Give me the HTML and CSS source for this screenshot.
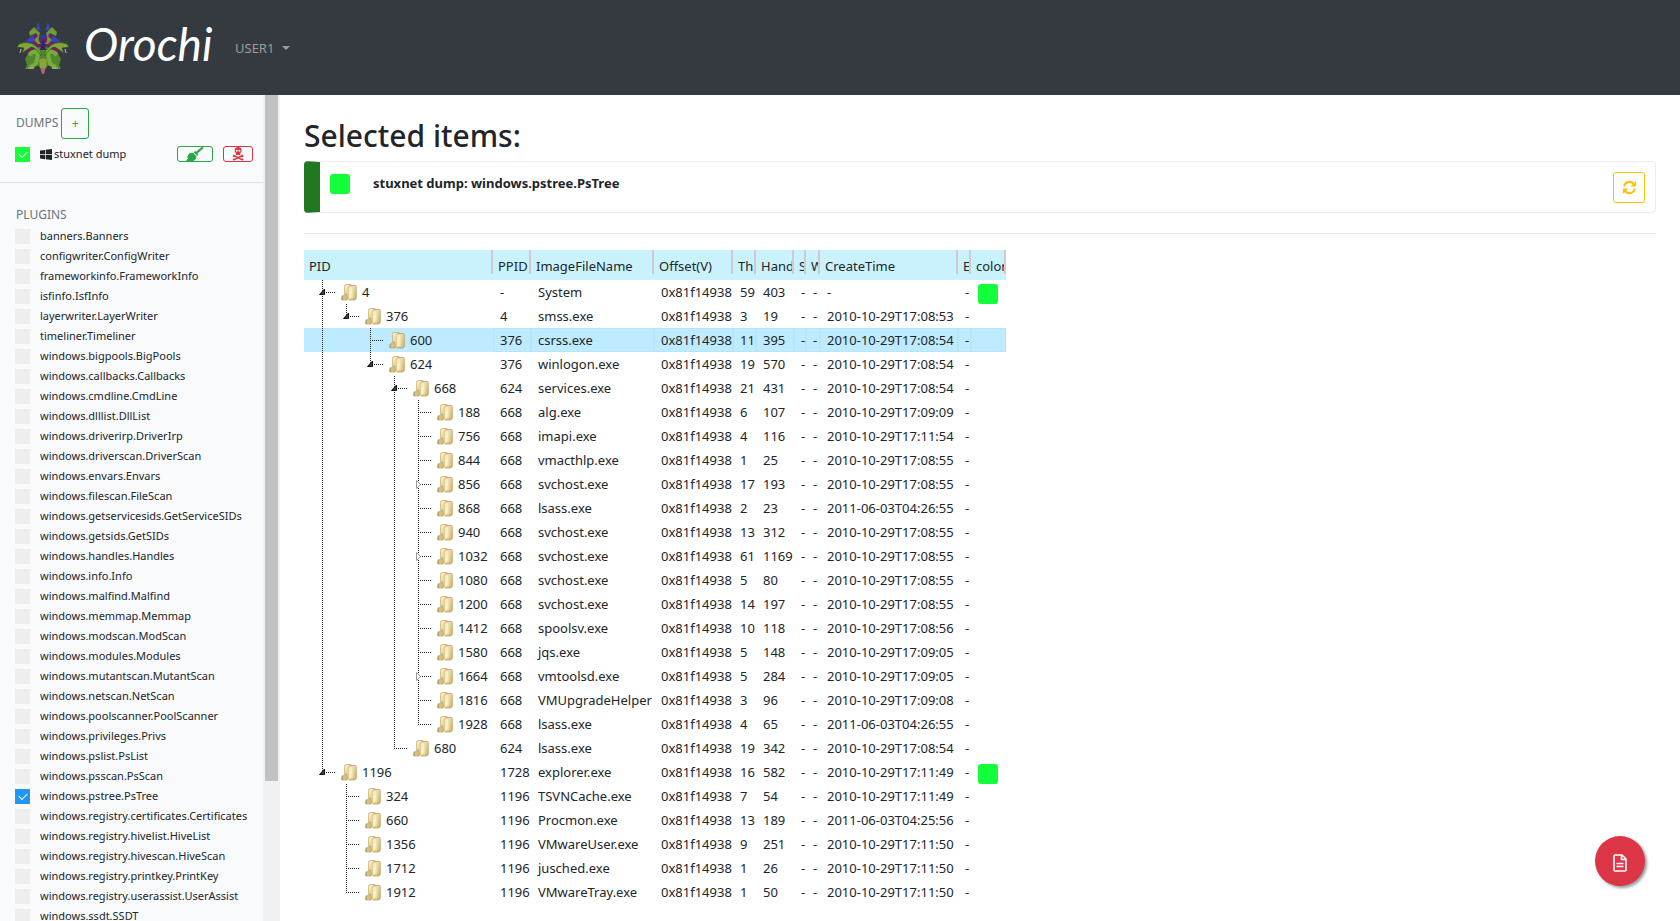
FILE: index.html
```html
<!DOCTYPE html>
<html lang="en">
<head>
<meta charset="utf-8">
<title>Orochi</title>
<link rel="stylesheet" href="styles.css">
</head>
<body>
<svg class="defs" width="0" height="0" aria-hidden="true">
  <defs>
    <linearGradient id="gold" x1="0" y1="0" x2="1" y2="1">
      <stop offset="0" stop-color="#fdf6d4"/><stop offset="1" stop-color="#d3b465"/>
    </linearGradient>
    <symbol id="folder" viewBox="0 0 16 17">
      <path d="M0 16V12.500L2 11V16Z" fill="#b9b9b9"/>
      <path d="M3.500 1.500Q3.500.5 4.500.5H10V15H5.500V10L3.500 9Z" fill="url(#gold)" stroke="#c4ab70" stroke-width=".7"/>
      <path d="M1.500 16V13Q3 11 4 9.500Q6 10 6 13V16Z" fill="#dcc27e" stroke="#b59c60" stroke-width=".7"/>
      <path d="M9 1.500H14Q15.300 1.500 15.300 3V14.500L14 16H8V3Z" fill="url(#gold)" stroke="#b0965a" stroke-width=".7"/>
      <path d="M7.500 3L12 2.500V13.500L7.500 15.500Z" fill="#f8eec8" stroke="#d6c084" stroke-width=".5"/>
    </symbol>
  </defs>
</svg>

<header class="navbar">
  <a class="brand" href="#">
    <svg class="brand-mark" viewBox="0 0 54 54" aria-hidden="true">
      <path d="M20 14L11 19L8 23L18 25L25 36L27 36L36 25L46 23L43 19L34 14Z" fill="#32398f"/>
      <path d="M18 12L25 16L27 25L29 16L36 12L39 25L45 32L37 30L33 39H21L17 30L8 32L15 25Z" fill="#721d68"/>
      <path d="M19 28Q27 23 35 28L41 31L45 38L43 44L45 48L36 48L34 42L30 47H24L20 42L18 48H9L11 44L9 38L13 31Z" fill="#55852c"/>
      <path d="M13 34Q19 28 22 33L20 43L14 46M41 34Q35 28 32 33L34 43L40 46" fill="none" stroke="#75ad3b" stroke-width="4"/>
      <path d="M25 31Q17 18 3 23L1 26L8 27L6 32L15 26Q20 26 25 35Z" fill="#76ad38" stroke="#34511f" stroke-width=".6"/>
      <path d="M29 31Q37 18 51 23L53 26L46 27L48 32L39 26Q34 26 29 35Z" fill="#76ad38" stroke="#34511f" stroke-width=".6"/>
      <path d="M25 23Q21 19 24 12L18 6L13 11L14 15L20 12L22 15L18 19L22 23ZM29 23Q33 19 30 12L36 6L41 11L40 15L34 12L32 15L36 19L32 23Z" fill="#65a036"/>
      <path d="M20 8L22 1L25 10M34 8L32 1L29 10M10 20L17 14L19 21M44 20L37 14L35 21" fill="#3e46b5"/>
      <path d="M24 29L27 17L30 29Z" fill="#262b60"/>
      <path d="M23 39Q27 36 31 39L30 46L28 52H26L24 46Z" fill="#83a83b"/>
      <path d="M25 47H29L28 53H26Z" fill="#b7607a"/>
      <path d="M16 11H20M34 11H38M6 25H12M42 25H48M24 40H30" stroke="#c97832" stroke-width="1.200"/>
      <path d="M12 47H18M36 47H42M5 28L4 32M49 28L50 32" stroke="#c4b9b4" stroke-width="1"/>
    </svg>
    <span class="brand-name">Orochi</span>
  </a>
  <button class="user-menu" type="button">USER1<span class="caret"></span></button>
</header>

<div class="layout">
  <aside class="sidebar">
    <div class="side-content">
      <div class="side-head"><span>DUMPS</span><button class="btn-add" type="button" aria-label="Add dump">+</button></div>
      <div class="dump">
        <input class="check check-green" type="checkbox" id="dump1" checked>
        <label for="dump1">
          <svg class="win" viewBox="0 0 12 11" aria-hidden="true"><path d="M0 1.600L5 .9V5.200H0ZM5.700.8L12 0V5.200H5.700ZM0 5.900H5V10.200L0 9.500ZM5.700 5.900H12V11L5.700 10.200Z" fill="#212529"/></svg>stuxnet dump</label>
        <button class="btn-mini broom" type="button" aria-label="Clean">
          <svg viewBox="0 0 20 16" aria-hidden="true"><path d="M19.500 0L18 0L11.500 5.500L10 4.500L9 6L12.500 10L14 9L13 7.500L20 1.500ZM8 6.500Q4 6 2.500 9L1 12.500L3 12L0 16H8Q11.500 15 12 10.800Z" fill="currentColor"/></svg>
        </button>
        <button class="btn-mini skull" type="button" aria-label="Delete">
          <svg viewBox="0 0 14 16" aria-hidden="true"><path fill-rule="evenodd" d="M7 0Q11 0 11 4Q11 6 9.500 6.800V9H4.500V6.800Q3 6 3 4Q3 0 7 0ZM5.500 3.200A1.100 1.100 0 1 0 5.500 5.400A1.100 1.100 0 1 0 5.500 3.200ZM8.500 3.200A1.100 1.100 0 1 0 8.500 5.400A1.100 1.100 0 1 0 8.500 3.200Z" fill="currentColor"/><path d="M1.500 9.500L12.500 15M12.500 9.500L1.500 15M1 10.500H2.500M11.500 10.500H13M1 14H2.500M11.500 14H13" stroke="currentColor" stroke-width="1.800"/></svg>
        </button>
      </div>
      <div class="rule"></div>
      <div class="side-head plugins-head">PLUGINS</div>
      <ul class="plugins" id="plugins"></ul>
    </div>
    <div class="track"><div class="thumb"></div></div>
  </aside>

  <main class="main">
    <h1>Selected items:</h1>
    <section class="card">
      <span class="swatch"></span>
      <strong>stuxnet dump: windows.pstree.PsTree</strong>
      <button class="btn-refresh" type="button" aria-label="Refresh">
        <svg viewBox="0 0 16 16" aria-hidden="true"><path d="M2.200 6.800A6 6 0 0 1 12.500 4M13.800 9.200A6 6 0 0 1 3.500 12" fill="none" stroke="currentColor" stroke-width="2.200"/><path d="M15 1V7H9ZM1 15V9H7Z" fill="currentColor"/></svg>
      </button>
    </section>
    <hr>
    <table class="tree">
      <colgroup><col class="c-pid"><col class="c-ppid"><col class="c-name"><col class="c-off"><col class="c-th"><col class="c-hand"><col class="c-s"><col class="c-w"><col class="c-time"><col class="c-e"><col class="c-color"></colgroup>
      <thead><tr><th><div>PID</div></th><th><div>PPID</div></th><th><div>ImageFileName</div></th><th><div>Offset(V)</div></th><th><div>Th</div></th><th><div>Hand</div></th><th><div>S</div></th><th><div>W</div></th><th><div>CreateTime</div></th><th><div>E</div></th><th><div>color</div></th></tr></thead>
      <tbody id="rows"></tbody>
    </table>
  </main>
</div>

<button class="fab" type="button" aria-label="Report">
  <svg viewBox="0 0 14 18" aria-hidden="true"><path d="M1 2Q1 1 2 1H9L13 5V16Q13 17 12 17H2Q1 17 1 16ZM8.500 1V5.500H13M3.500 9.500H10.500M3.500 12.500H10.500" fill="none" stroke="#fff" stroke-width="1.600"/></svg>
</button>
<script src="app.js"></script>
</body>
</html>
```
FILE: styles.css
```css
* { box-sizing: border-box; }
body {
  margin: 0;
  height: 100vh;
  display: flex;
  flex-direction: column;
  overflow: hidden;
  font: 13px/20px "Noto Sans", "Open Sans", sans-serif;
  color: #212529;
  background: #fff;
}
button { font: inherit; background: none; padding: 0; cursor: pointer; }
.defs { position: absolute; }

.navbar {
  flex: none;
  height: 95px;
  padding: 0 16px;
  display: flex;
  align-items: center;
  background: #343a40;
}
.brand { display: flex; align-items: center; gap: 14px; color: #fff; text-decoration: none; }
.brand-mark { width: 54px; height: 54px; }
.brand-name { width: 128px; font: italic 46px/72px Lato, cursive; padding-bottom: 8px; }
.user-menu { margin-left: 23px; border: 0; color: #999c9f; display: flex; align-items: center; gap: 8px; }
.caret { border: 4px solid transparent; border-top-color: currentColor; border-bottom: 0; }

.layout { flex: 1; min-height: 0; display: flex; }
.sidebar { flex: none; width: 280px; display: flex; overflow: hidden; background: #f8fafc; }
.side-content { flex: 1; font-size: 11px; }
.track { width: 17px; padding: 0 2px; background: #f1f1f1; }
.thumb { height: 83%; background: #c1c1c1; }
.side-head { display: flex; align-items: center; gap: 3px; padding: 13px 0 0 16px; font-size: 12px; color: #6c757d; }
.side-head span { padding-bottom: 2px; }
.btn-add { width: 28px; height: 31px; border: 1px solid #28a745; border-radius: 3px; color: #28a745; }
.dump { display: flex; align-items: center; height: 20px; margin: 5px 10px 0 15px; }
.dump label { flex: 1; display: flex; align-items: center; gap: 2px; padding-left: 10px; }
.win { width: 12px; height: 11px; }
.btn-mini { height: 16px; border: 1px solid; border-radius: 3px; display: flex; justify-content: center; }
.btn-mini svg { height: 14px; }
.broom { width: 36px; color: #28a745; margin-right: 10px; }
.skull { width: 30px; color: #dc3545; }
.rule { height: 1px; margin-top: 18px; background: #dfe1e3; }
.plugins-head { padding-top: 22px; }
.plugins { list-style: none; margin: 1px 0 0; padding: 0 0 0 15px; }
.plugins li { display: flex; align-items: center; height: 20px; }
.plugins label { padding-left: 10px; white-space: nowrap; }

.check {
  appearance: none;
  flex: none;
  width: 15px;
  height: 15px;
  margin: 0;
  display: grid;
  place-items: center;
  background: #eee;
}
.check:checked { background: #2196f3; }
.check-green:checked { background: #12ff39; }
.check:checked::after {
  content: "";
  width: 7px;
  height: 4px;
  border: solid #fff;
  border-width: 0 0 1px 1px;
  transform: translateY(-1px) rotate(-45deg);
}

.main { flex: 1; min-width: 0; padding: 21px 24px 0; }
h1 { margin: 0 0 5px; font-size: 30px; font-weight: 500; line-height: 40px; }
.card {
  display: flex;
  align-items: center;
  height: 52px;
  padding: 0 10px;
  border: 1px solid #eee;
  border-left: 16px solid #217821;
  border-radius: 4px;
}
.swatch { display: block; width: 20px; height: 20px; border-radius: 3px; background: #12ff39; }
.card .swatch { margin-bottom: 6px; }
.card strong { flex: 1; padding: 0 0 8px 23px; font-size: 13px; }
.btn-refresh { width: 32px; height: 31px; border: 1px solid #ffc107; border-radius: 3px; color: #ffc107; display: grid; place-items: center; }
.btn-refresh svg { width: 15px; height: 15px; }
hr { margin: 20px 0 16px; border: 0; border-top: 1px solid #e5e5e5; }

.tree { table-layout: fixed; width: 702px; border-collapse: separate; border-spacing: 0; }
.c-pid { width: 189px; }
.c-ppid, .c-hand { width: 38px; }
.c-name { width: 123px; }
.c-off { width: 79px; }
.c-th { width: 23px; }
.c-s { width: 12px; }
.c-w { width: 14px; }
.c-time { width: 138px; }
.c-e { width: 13px; }
.c-color { width: 35px; }
.tree th {
  height: 30px;
  padding: 2px 2px 0 5px;
  font-weight: 400;
  text-align: left;
  white-space: nowrap;
  background: linear-gradient(#ccc, #ccc) right top / 2px 24px no-repeat, #caf2fd;
}
.tree th div { overflow: hidden; }
.tree td { height: 24px; padding: 0 0 0 7px; white-space: nowrap; overflow: hidden; }
.tree td:first-child { padding-left: 6px; }
.selected td { background: #beebff; }
.selected td + td { box-shadow: inset 0 0 0 1px #b6e4f8; }
.tree .swatch { margin-top: 3px; }
.node { display: flex; align-items: center; height: 24px; }
.guide { position: relative; flex: none; width: 24px; height: 24px; }
.line::before {
  content: "";
  position: absolute;
  left: 12px;
  top: 0;
  width: 1px;
  height: 24px;
  background: repeating-linear-gradient(#222 0 1px, transparent 1px 2px);
}
.end::before { height: 12px; }
.elbow::after, .end::after {
  content: "";
  position: absolute;
  left: 12px;
  top: 12px;
  width: 13px;
  height: 1px;
  background: repeating-linear-gradient(90deg, #222 0 1px, transparent 1px 2px);
}
.toggle { position: absolute; z-index: 1; left: 9px; top: 8px; width: 6px; height: 7px; }
.toggle path { fill: #404040; stroke: #111; }
.closed { left: 10px; width: 5px; height: 9px; }
.closed path { fill: #fff; stroke: #999; }
.folder { flex: none; width: 16px; height: 17px; margin: 0 5px 0 7px; }

.fab {
  position: fixed;
  right: 35px;
  bottom: 35px;
  width: 50px;
  height: 50px;
  border: 0;
  border-radius: 50%;
  background: #dc3545;
  box-shadow: 2px 2px 3px #999;
  display: grid;
  place-items: center;
}
.fab svg { width: 14px; height: 18px; margin-top: 4px; }
```
FILE: app.js
```javascript
const plugins = `banners.Banners configwriter.ConfigWriter frameworkinfo.FrameworkInfo isfinfo.IsfInfo
layerwriter.LayerWriter timeliner.Timeliner windows.bigpools.BigPools windows.callbacks.Callbacks
windows.cmdline.CmdLine windows.dlllist.DllList windows.driverirp.DriverIrp windows.driverscan.DriverScan
windows.envars.Envars windows.filescan.FileScan windows.getservicesids.GetServiceSIDs windows.getsids.GetSIDs
windows.handles.Handles windows.info.Info windows.malfind.Malfind windows.memmap.Memmap
windows.modscan.ModScan windows.modules.Modules windows.mutantscan.MutantScan windows.netscan.NetScan
windows.poolscanner.PoolScanner windows.privileges.Privs windows.pslist.PsList windows.psscan.PsScan
windows.pstree.PsTree windows.registry.certificates.Certificates windows.registry.hivelist.HiveList
windows.registry.hivescan.HiveScan windows.registry.printkey.PrintKey windows.registry.userassist.UserAssist
windows.ssdt.SSDT`.split(/\s+/);

document.getElementById("plugins").innerHTML = plugins.map((name, i) =>
  `<li><input class="check" type="checkbox" id="p${i}"${name === "windows.pstree.PsTree" ? " checked" : ""}><label for="p${i}">${name}</label></li>`
).join("");

// Guides, one letter per level: "|" passes through, "+" branch, "L" last branch, "." blank.
// Toggle: "o" open, "c" closed, "-" none.
const rows = `+ o 4 - System 59 403 -
|L o 376 4 smss.exe 3 19 2010-10-29T17:08:53
|.+ - 600 376 csrss.exe 11 395 2010-10-29T17:08:54
|.L o 624 376 winlogon.exe 19 570 2010-10-29T17:08:54
|..+ o 668 624 services.exe 21 431 2010-10-29T17:08:54
|..|+ - 188 668 alg.exe 6 107 2010-10-29T17:09:09
|..|+ - 756 668 imapi.exe 4 116 2010-10-29T17:11:54
|..|+ - 844 668 vmacthlp.exe 1 25 2010-10-29T17:08:55
|..|+ c 856 668 svchost.exe 17 193 2010-10-29T17:08:55
|..|+ - 868 668 lsass.exe 2 23 2011-06-03T04:26:55
|..|+ - 940 668 svchost.exe 13 312 2010-10-29T17:08:55
|..|+ c 1032 668 svchost.exe 61 1169 2010-10-29T17:08:55
|..|+ - 1080 668 svchost.exe 5 80 2010-10-29T17:08:55
|..|+ - 1200 668 svchost.exe 14 197 2010-10-29T17:08:55
|..|+ - 1412 668 spoolsv.exe 10 118 2010-10-29T17:08:56
|..|+ - 1580 668 jqs.exe 5 148 2010-10-29T17:09:05
|..|+ c 1664 668 vmtoolsd.exe 5 284 2010-10-29T17:09:05
|..|+ - 1816 668 VMUpgradeHelper 3 96 2010-10-29T17:09:08
|..|L - 1928 668 lsass.exe 4 65 2011-06-03T04:26:55
|..L - 680 624 lsass.exe 19 342 2010-10-29T17:08:54
L o 1196 1728 explorer.exe 16 582 2010-10-29T17:11:49
.+ - 324 1196 TSVNCache.exe 7 54 2010-10-29T17:11:49
.+ - 660 1196 Procmon.exe 13 189 2011-06-03T04:25:56
.+ - 1356 1196 VMwareUser.exe 9 251 2010-10-29T17:11:50
.+ - 1712 1196 jusched.exe 1 26 2010-10-29T17:11:50
.L - 1912 1196 VMwareTray.exe 1 50 2010-10-29T17:11:50`.split("\n");

const guideClass = { "|": "line", "+": "line elbow", "L": "line end", ".": "" };
const toggles = {
  o: '<svg class="toggle" viewBox="0 0 6 7"><path d="M5.500 1V6.500H.5Z"/></svg>',
  c: '<svg class="toggle closed" viewBox="0 0 5 9"><path d="M.5.5L4.500 4.500L.5 8.500Z"/></svg>',
  "-": ""
};

document.getElementById("rows").innerHTML = rows.map(row => {
  const [guides, toggle, pid, ppid, name, threads, handles, time] = row.split(" ");
  const spans = [...guides].map((g, i) =>
    `<span class="guide ${guideClass[g]}">${i === guides.length - 1 ? toggles[toggle] : ""}</span>`).join("");
  const cells = [ppid, name, "0x81f14938", threads, handles, "-", "-", time, "-"].map(v => `<td>${v}</td>`).join("");
  const color = guides.length === 1 ? '<span class="swatch"></span>' : "";
  return `<tr${pid === "600" ? ' class="selected"' : ""}><td><div class="node">${spans}<svg class="folder"><use href="#folder"/></svg>${pid}</div></td>${cells}<td>${color}</td></tr>`;
}).join("");
```
